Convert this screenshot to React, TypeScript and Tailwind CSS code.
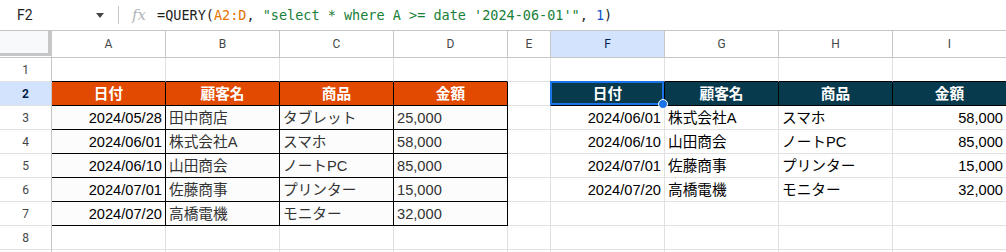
import React from "react";

const cols = ["A", "B", "C", "D", "E", "F", "G", "H", "I"];

const leftRows = [
  ["2024/05/28", "田中商店", "タブレット", "25,000"],
  ["2024/06/01", "株式会社A", "スマホ", "58,000"],
  ["2024/06/10", "山田商会", "ノートPC", "85,000"],
  ["2024/07/01", "佐藤商事", "プリンター", "15,000"],
  ["2024/07/20", "高橋電機", "モニター", "32,000"],
];

const rightRows = leftRows.slice(1);
const heads = ["日付", "顧客名", "商品", "金額"];

const font = { fontFamily: '"Liberation Sans", Arial, "Noto Sans CJK JP", sans-serif' };

function Cell({
  children,
  className = "",
  r = "border-r-[#e1e1e1]",
  b = "border-b-[#e1e1e1]",
}: {
  children?: React.ReactNode;
  className?: string;
  r?: string;
  b?: string;
}) {
  return (
    <div className={`relative flex items-center whitespace-nowrap border-r border-b ${r} ${b} ${className}`}>
      {children}
    </div>
  );
}

function RowHead({ n, active }: { n: number; active?: boolean }) {
  return (
    <div
      className={`flex items-center justify-center border-r border-b border-r-[#c4c7c5] border-b-[#e1e1e1] text-[12px] font-[Roboto] ${
        active ? "bg-[#d3e3fd] font-bold text-[#041e49]" : "bg-white text-[#444746]"
      }`}
    >
      {n < 9 ? n : null}
    </div>
  );
}

export default function App() {
  const rows: React.ReactNode[] = [];

  for (let r = 1; r <= 9; r++) {
    rows.push(<RowHead key={`h${r}`} n={r} active={r === 2} />);
    for (let c = 0; c < 9; c++) {
      const key = `${r}-${c}`;
      // left table A2:D7
      if (c < 4) {
        if (r === 1) {
          rows.push(<Cell key={key} b="border-b-black" />);
        } else if (r === 2) {
          rows.push(
            <Cell key={key} r="border-r-black" b="border-b-black" className="justify-center bg-[#e14a00] text-[14.67px] font-bold text-white">
              {heads[c]}
            </Cell>
          );
        } else if (r <= 7) {
          const v = leftRows[r - 3][c];
          rows.push(
            <Cell
              key={key}
              r="border-r-black"
              b="border-b-black"
              className={`bg-[#fcfcfc] text-[14.67px] ${c === 0 ? "justify-end pr-[3px] text-black" : "pl-[3px] text-[#333333]"}`}
            >
              {v}
            </Cell>
          );
        } else {
          rows.push(<Cell key={key} />);
        }
        continue;
      }
      if (c === 4) {
        rows.push(<Cell key={key} r={r === 2 ? "border-r-black" : "border-r-[#e1e1e1]"} />);
        continue;
      }
      const rc = c - 5;
      if (r === 1) {
        rows.push(<Cell key={key} b="border-b-black" />);
      } else if (r === 2) {
        rows.push(
          <Cell key={key} r="border-r-black" b="border-b-black" className="justify-center bg-[#073a4d] text-[14.67px] font-bold text-white">
            {heads[rc]}
            {rc === 0 && (
              <div className="absolute left-[-1px] top-[-1px] right-0 bottom-0 z-10 border-2 border-[#1a73e8]">
                <div className="absolute right-[-6px] bottom-[-6px] h-[10px] w-[10px] rounded-full border border-white bg-[#1a73e8]" />
              </div>
            )}
          </Cell>
        );
      } else if (r <= 6) {
        const v = rightRows[r - 3][rc];
        const right = rc === 0 || rc === 3;
        rows.push(
          <Cell key={key} className={`text-[14.67px] text-black ${right ? "justify-end pr-[3px]" : "pl-[3px]"}`}>
            {v}
          </Cell>
        );
      } else {
        rows.push(<Cell key={key} />);
      }
    }
  }

  return (
    <div className="h-[252px] w-[1006px] overflow-hidden bg-white" style={font}>
      {/* formula bar */}
      <div className="flex h-[31px] items-center border-b border-[#c4c7c5]">
        <div className="flex w-[112px] items-center justify-between pl-[17px] pr-[8px]">
          <span className="font-[Roboto] text-[14px] text-[#1f1f1f]">F2</span>
          <span className="h-0 w-0 border-x-[4px] border-t-[5px] border-x-transparent border-t-[#444746]" />
        </div>
        <div className="ml-[6px] h-[18px] w-px bg-[#c4c7c5]" />
        <span className="ml-[13px] font-['DejaVu_Serif'] text-[15px] italic text-[#b0b3b8]">fx</span>
        <span className="ml-[11px] font-['DejaVu_Sans_Mono'] text-[13.5px] text-[#1f1f1f]">
          =QUERY(<span className="text-[#e37400]">A2:D</span>, <span className="text-[#188038]">"select * where A &gt;= date '2024-06-01'"</span>, <span className="text-[#1155cc]">1</span>)
        </span>
      </div>

      {/* grid */}
      <div className="grid grid-cols-[52px_repeat(4,114px)_43px_repeat(4,114px)] grid-rows-[27px_repeat(9,24px)]">
        <div className="border-r border-b border-[#c4c7c5] bg-white">
          <div className="h-[25px] w-[51px] border-r-[3px] border-b-[3px] border-[#c4c7c5] bg-[#f8f9fa]" />
        </div>
        {cols.map((c) => (
          <div
            key={c}
            className={`flex items-center justify-center border-r border-b border-[#c4c7c5] font-[Roboto] text-[12px] ${
              c === "F" ? "bg-[#d3e3fd] text-[#041e49]" : "bg-white text-[#444746]"
            }`}
          >
            {c}
          </div>
        ))}
        {rows}
      </div>
    </div>
  );
}
